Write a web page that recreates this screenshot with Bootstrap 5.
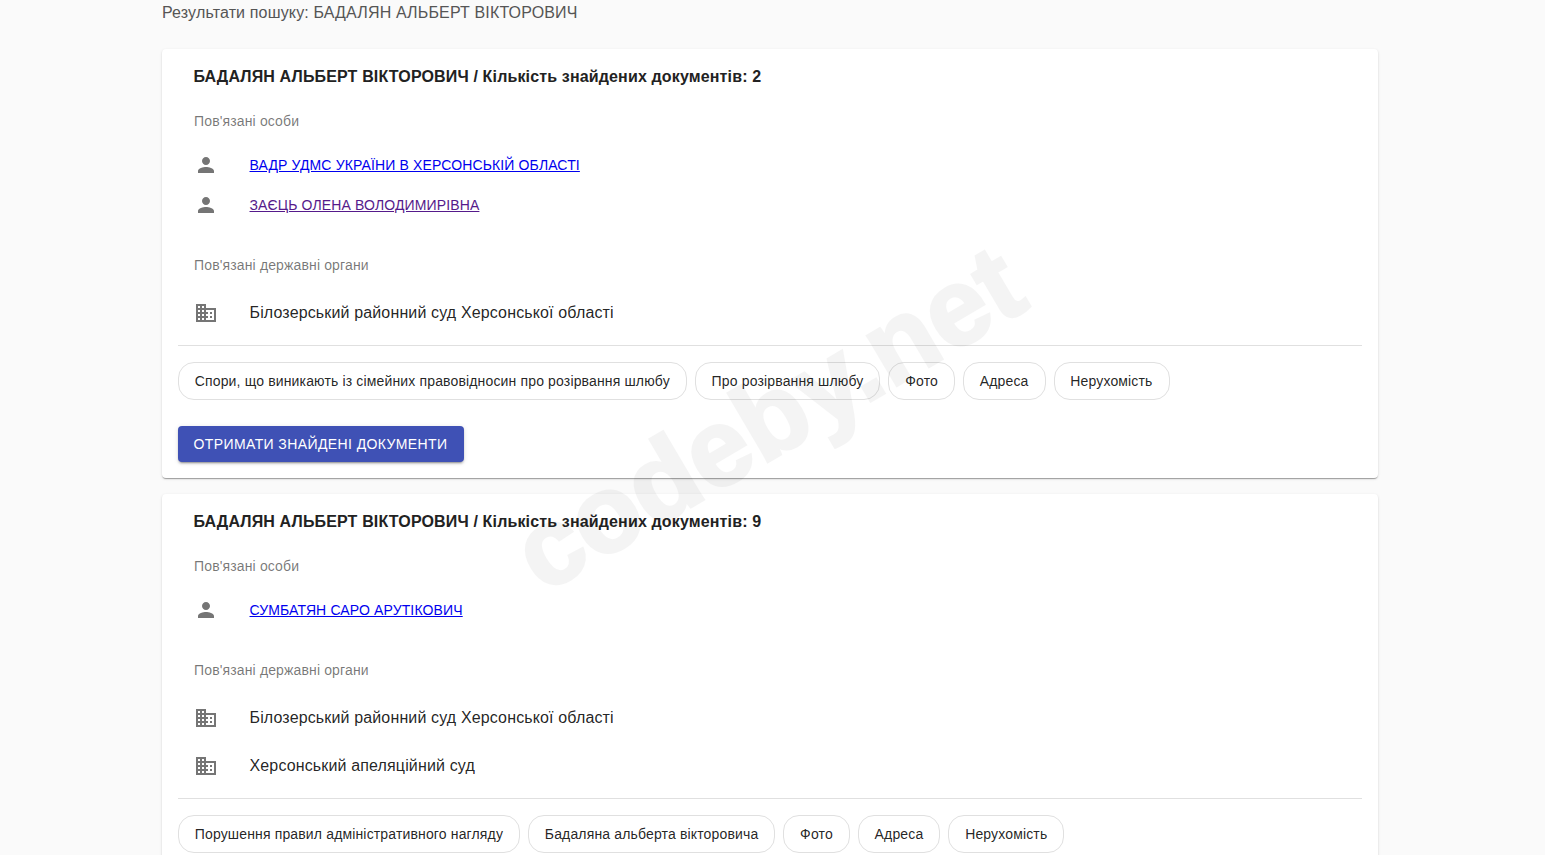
<!DOCTYPE html>
<html lang="uk">
<head>
<meta charset="utf-8">
<title>Результати пошуку</title>
<link href="https://cdn.jsdelivr.net/npm/bootstrap@5.3.0/dist/css/bootstrap.min.css" rel="stylesheet">
<style>
html,body{height:855px;overflow:hidden}
body{background:#fafafa;font-family:"Liberation Sans",Arial,sans-serif;color:rgba(0,0,0,.87);font-size:16px}
.page-wrap{width:1216px;margin-left:162px}
.search-head{font-size:16px;line-height:24px;color:#555;height:49px;padding-top:1px;letter-spacing:.15px}
.res-card{border:0;border-radius:4px;background:#fff;margin-bottom:16px;box-shadow:0 2px 1px -1px rgba(0,0,0,.2),0 1px 1px 0 rgba(0,0,0,.14),0 1px 3px 0 rgba(0,0,0,.12)}
.res-title{font-size:16px;font-weight:700;line-height:24px;padding:16px 16px 0 31.5px;height:48px;letter-spacing:.15px;color:#222}
.sub-head{font-size:14px;line-height:48px;height:48px;padding-left:32px;color:rgba(0,0,0,.54);letter-spacing:.14px}
.res-list{padding:0 0 8px}
.res-list+.res-list{padding-top:8px}
.first-list{padding-top:0}
.row-dense{height:40px;padding-left:32px;font-size:14px;letter-spacing:.135px}
.row-tall{height:48px;padding-left:32px;font-size:16px;letter-spacing:.14px}
.ico-slot{width:55.5px;flex:none;display:flex}
.ico-slot svg{width:24px;height:24px;fill:#757575}
.res-link{color:#00e;text-decoration:underline}
.res-link.seen{color:#551a8b}
.sep{height:1px;background:#e0e0e0;margin:0 16px}
.tag-row{padding:16px 16px 0;gap:8px}
.tag-pill{height:38px;border:1px solid #e0e0e0;border-radius:16px;padding:0 16px 0 15.75px;font-size:14px;line-height:36px;color:rgba(0,0,0,.87);background:transparent;white-space:nowrap;letter-spacing:.15px}
.get-docs{margin:26px 16px 16px;height:36px;padding:0 16px 0 15.5px;border:0;border-radius:4px;background:#3f51b5;color:#fff;font-size:14px;font-weight:400;letter-spacing:.4px;line-height:36px;box-shadow:0 3px 1px -2px rgba(0,0,0,.2),0 2px 2px 0 rgba(0,0,0,.14),0 1px 5px 0 rgba(0,0,0,.12)}
.get-docs:hover{background:#3f51b5;color:#fff}
.wm-text{position:absolute;left:768px;top:418px;transform:translate(-50%,-50%) rotate(-30.5deg);font-size:109px;font-weight:700;color:#000;-webkit-text-stroke:3px #000;opacity:.04;line-height:1;pointer-events:none;white-space:nowrap}
</style>
</head>
<body>
<svg width="0" height="0" class="d-block">
<symbol id="i-person" viewBox="0 0 24 24"><path d="M12 12c2.21 0 4-1.79 4-4s-1.79-4-4-4-4 1.79-4 4 1.79 4 4 4zm0 2c-2.67 0-8 1.34-8 4v2h16v-2c0-2.66-5.33-4-8-4z"/></symbol>
<symbol id="i-domain" viewBox="0 0 24 24"><path d="M12 7V3H2v18h20V7H12zM6 19H4v-2h2v2zm0-4H4v-2h2v2zm0-4H4V9h2v2zm0-4H4V5h2v2zm4 12H8v-2h2v2zm0-4H8v-2h2v2zm0-4H8V9h2v2zm0-4H8V5h2v2zm10 12h-8v-2h2v-2h-2v-2h2v-2h-2V9h8v10zm-2-8h-2v2h2v-2zm0 4h-2v2h2v-2z"/></symbol>
</svg>
<div class="page-wrap">
  <div class="search-head">Результати пошуку: БАДАЛЯН АЛЬБЕРТ ВІКТОРОВИЧ</div>

  <div class="card res-card">
    <div class="res-title">БАДАЛЯН АЛЬБЕРТ ВІКТОРОВИЧ / Кількість знайдених документів: 2</div>
    <div class="res-list first-list">
      <div class="sub-head">Пов'язані особи</div>
      <div class="row-dense d-flex align-items-center"><span class="ico-slot"><svg><use href="#i-person"/></svg></span><a class="res-link" href="#">ВАДР УДМС УКРАЇНИ В ХЕРСОНСЬКІЙ ОБЛАСТІ</a></div>
      <div class="row-dense d-flex align-items-center"><span class="ico-slot"><svg><use href="#i-person"/></svg></span><a class="res-link seen" href="#">ЗАЄЦЬ ОЛЕНА ВОЛОДИМИРІВНА</a></div>
    </div>
    <div class="res-list">
      <div class="sub-head">Пов'язані державні органи</div>
      <div class="row-tall d-flex align-items-center"><span class="ico-slot"><svg><use href="#i-domain"/></svg></span><span>Білозерський районний суд Херсонської області</span></div>
    </div>
    <div class="sep"></div>
    <div class="tag-row d-flex flex-wrap">
      <span class="tag-pill">Спори, що виникають із сімейних правовідносин про розірвання шлюбу</span>
      <span class="tag-pill">Про розірвання шлюбу</span>
      <span class="tag-pill">Фото</span>
      <span class="tag-pill">Адреса</span>
      <span class="tag-pill">Нерухомість</span>
    </div>
    <div><button type="button" class="btn get-docs">ОТРИМАТИ ЗНАЙДЕНІ ДОКУМЕНТИ</button></div>
  </div>

  <div class="card res-card">
    <div class="res-title">БАДАЛЯН АЛЬБЕРТ ВІКТОРОВИЧ / Кількість знайдених документів: 9</div>
    <div class="res-list first-list">
      <div class="sub-head">Пов'язані особи</div>
      <div class="row-dense d-flex align-items-center"><span class="ico-slot"><svg><use href="#i-person"/></svg></span><a class="res-link" href="#">СУМБАТЯН САРО АРУТІКОВИЧ</a></div>
    </div>
    <div class="res-list">
      <div class="sub-head">Пов'язані державні органи</div>
      <div class="row-tall d-flex align-items-center"><span class="ico-slot"><svg><use href="#i-domain"/></svg></span><span>Білозерський районний суд Херсонської області</span></div>
      <div class="row-tall d-flex align-items-center"><span class="ico-slot"><svg><use href="#i-domain"/></svg></span><span>Херсонський апеляційний суд</span></div>
    </div>
    <div class="sep"></div>
    <div class="tag-row d-flex flex-wrap">
      <span class="tag-pill">Порушення правил адміністративного нагляду</span>
      <span class="tag-pill">Бадаляна альберта вікторовича</span>
      <span class="tag-pill">Фото</span>
      <span class="tag-pill">Адреса</span>
      <span class="tag-pill">Нерухомість</span>
    </div>
    <div><button type="button" class="btn get-docs">ОТРИМАТИ ЗНАЙДЕНІ ДОКУМЕНТИ</button></div>
  </div>
</div>
<div class="wm-text">codeby.net</div>
<script src="https://cdn.jsdelivr.net/npm/bootstrap@5.3.0/dist/js/bootstrap.bundle.min.js"></script>
</body>
</html>
